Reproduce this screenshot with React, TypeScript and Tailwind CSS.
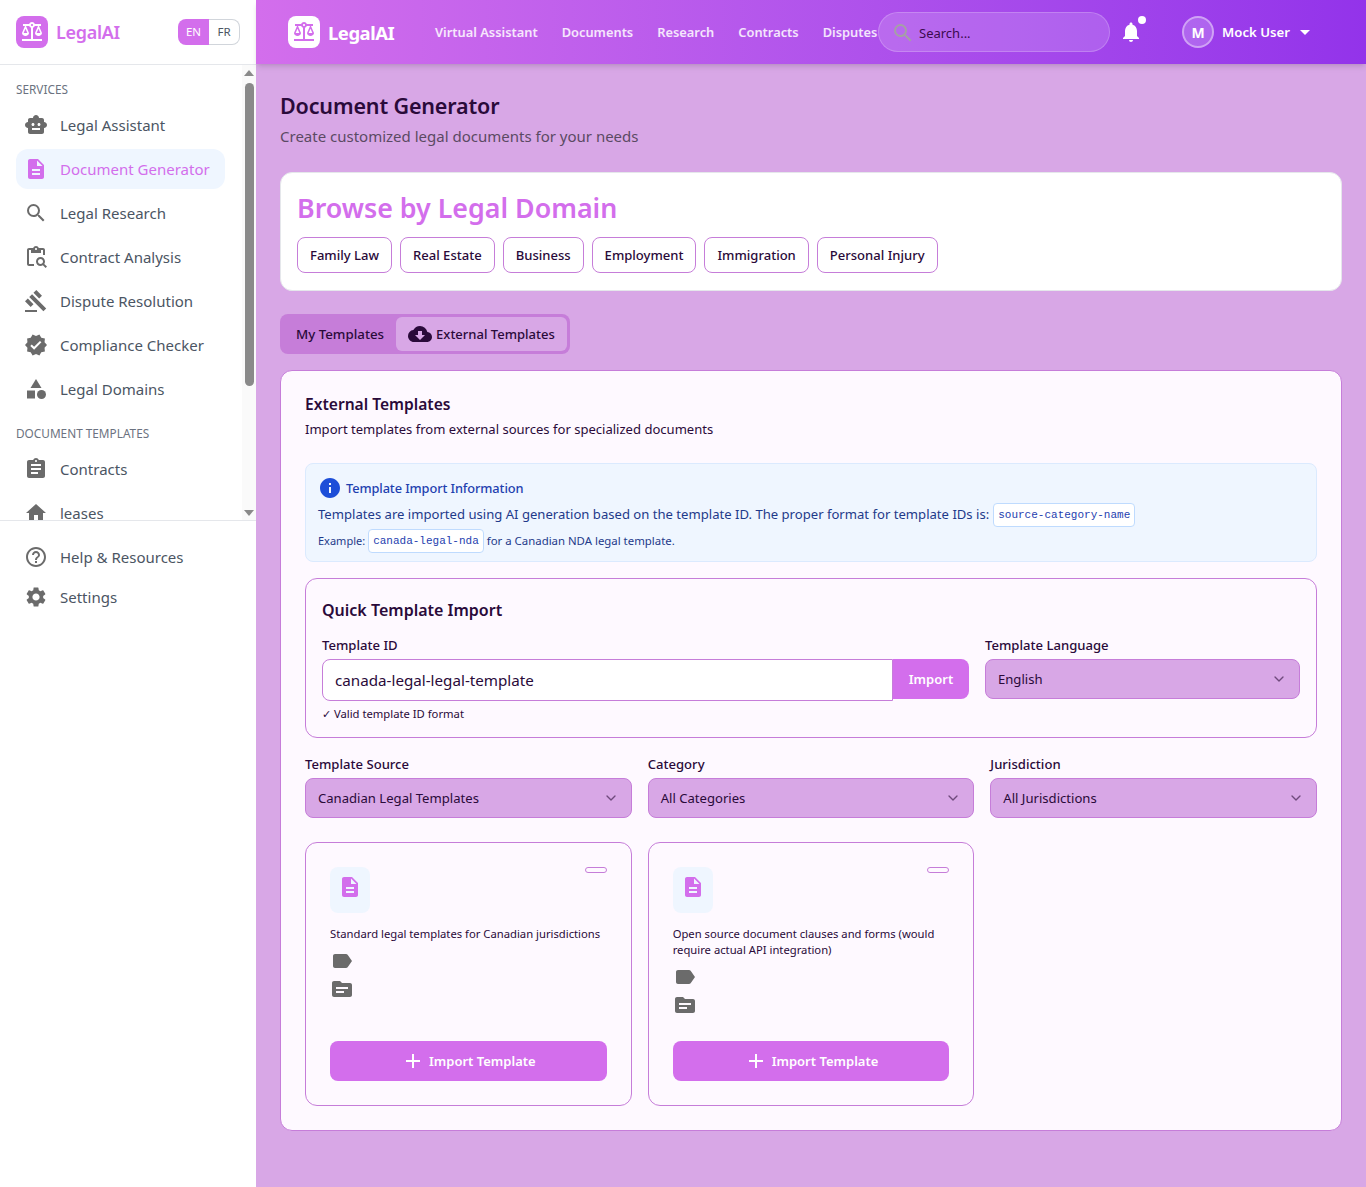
import React from 'react';
import { ChevronDown } from 'lucide-react';
import {
  MdAdd,
  MdArrowDropDown,
  MdAssignment,
  MdBalance,
  MdCategory,
  MdCloudDownload,
  MdDescription,
  MdGavel,
  MdHelpOutline,
  MdHome,
  MdInfo,
  MdLabel,
  MdNotifications,
  MdOutlineContentPasteSearch,
  MdSearch,
  MdSettings,
  MdSmartToy,
  MdTopic,
  MdVerified,
} from 'react-icons/md';
import type { IconType } from 'react-icons';

interface NavItem {
  label: string;
  icon: IconType;
  active?: boolean;
}

const services: NavItem[] = [
  { label: 'Legal Assistant', icon: MdSmartToy },
  { label: 'Document Generator', icon: MdDescription, active: true },
  { label: 'Legal Research', icon: MdSearch },
  { label: 'Contract Analysis', icon: MdOutlineContentPasteSearch },
  { label: 'Dispute Resolution', icon: MdGavel },
  { label: 'Compliance Checker', icon: MdVerified },
  { label: 'Legal Domains', icon: MdCategory },
];

const domains = ['Family Law', 'Real Estate', 'Business', 'Employment', 'Immigration', 'Personal Injury'];
const topLinks = ['Virtual Assistant', 'Documents', 'Research', 'Contracts', 'Disputes'];

const SideLink = ({ label, icon: Icon, active }: NavItem) => (
  <div
    className={`flex h-10 shrink-0 items-center gap-3 rounded-xl pl-2 text-[15px] whitespace-nowrap ${
      active ? 'bg-[#eff6ff] text-[#d36eec]' : 'text-[#4b5563]'
    }`}
  >
    <Icon className={`h-6 w-6 shrink-0 ${active ? 'text-[#d36eec]' : 'text-[#6b6b6b]'}`} />
    <span>{label}</span>
  </div>
);

const Sidebar = () => (
  <aside className="flex h-[1187px] w-[256px] shrink-0 flex-col bg-white">
    <div className="flex h-[65px] shrink-0 items-center justify-between border-b border-[#e5e7eb] pl-4 pr-4">
      <div className="flex items-center gap-2">
        <div className="flex h-8 w-8 items-center justify-center rounded-lg bg-[#d36eec]">
          <MdBalance className="h-6 w-6 text-white" />
        </div>
        <span className="text-[18px] font-semibold tracking-[-0.3px] text-[#d36eec]">LegalAI</span>
      </div>
      <div className="flex h-[26px] w-[62px] text-[11.5px]">
        <span className="flex w-[31px] items-center justify-center rounded-l-lg bg-[#d36eec] text-white">EN</span>
        <span className="flex flex-1 items-center justify-center rounded-r-lg border-y border-r border-[#d1d5db] text-[#4b5563]">
          FR
        </span>
      </div>
    </div>
    <div className="flex h-[456px] shrink-0 overflow-hidden border-b border-[#e5e7eb]">
      <div className="w-[242px] shrink-0 overflow-hidden pl-4 pr-[17px] pt-4">
        <p className="mb-[8px] text-[11.8px] leading-4 text-[#6b7280]">SERVICES</p>
        <div className="flex flex-col gap-1">
          {services.map((item) => (
            <SideLink key={item.label} {...item} />
          ))}
        </div>
        <p className="mb-[8px] mt-[16px] text-[11.8px] leading-4 text-[#6b7280]">DOCUMENT TEMPLATES</p>
        <div className="flex flex-col gap-1">
          <SideLink label="Contracts" icon={MdAssignment} />
          <SideLink label="leases" icon={MdHome} />
        </div>
      </div>
      <div className="flex w-[14px] shrink-0 flex-col items-center bg-[#fafafa]">
        <div className="mt-[5px] h-0 w-0 border-x-[5px] border-b-[6px] border-x-transparent border-b-[#8a8a8a]" />
        <div className="mt-[7px] h-[303px] w-[9px] rounded-full bg-[#8a8a8a]" />
        <div className="mt-auto mb-[4px] h-0 w-0 border-x-[5px] border-t-[6px] border-x-transparent border-t-[#8a8a8a]" />
      </div>
    </div>
    <div className="flex flex-col pl-4 pr-[31px] pt-4">
      <SideLink label="Help & Resources" icon={MdHelpOutline} />
      <SideLink label="Settings" icon={MdSettings} />
    </div>
  </aside>
);

const TopBar = () => (
  <header className="relative z-10 flex h-16 shrink-0 items-center bg-gradient-to-r from-[#d36eec] to-[#9333ea] pl-8 shadow-md">
    <div className="flex w-[147px] shrink-0 items-center gap-2">
      <div className="flex h-8 w-8 items-center justify-center rounded-lg bg-white">
        <MdBalance className="h-6 w-6 text-[#d36eec]" />
      </div>
      <span className="pt-px text-[18.5px] font-bold tracking-[-0.5px] text-white">LegalAI</span>
    </div>
    <nav className="flex w-[443px] shrink-0 gap-6 whitespace-nowrap pt-px text-[12.85px] font-semibold text-white/85">
      {topLinks.map((link) => (
        <span key={link}>{link}</span>
      ))}
    </nav>
    <div className="flex h-10 w-[232px] shrink-0 items-center rounded-[20px] border border-white/20 bg-white/15 pl-3">
      <MdSearch className="mt-[2px] h-6 w-6 text-[#a5a0a5]" />
      <span className="ml-[4px] pt-[3px] text-[13px] text-[#3b0a4f]">Search...</span>
    </div>
    <div className="relative ml-[9px] flex h-10 w-6 shrink-0 items-center justify-center">
      <MdNotifications className="h-6 w-6 text-white" />
      <span className="absolute right-[-3px] top-1 h-2 w-2 rounded-full bg-white" />
    </div>
    <div className="ml-[39px] flex h-8 w-8 shrink-0 items-center justify-center rounded-full border-2 border-white/40 bg-white/20 text-[14px] font-bold text-white">
      M
    </div>
    <span className="ml-2 pt-px text-[13.2px] font-semibold text-white">Mock User</span>
    <MdArrowDropDown className="ml-[3px] h-6 w-6 text-white" />
  </header>
);

const Select = ({ label, value }: { label: string; value: string }) => (
  <div className="flex min-w-0 flex-col">
    <label className="mb-1 text-[13.1px] font-medium leading-5 text-[#2a0a3a]">{label}</label>
    <div className="flex h-10 items-center justify-between rounded-lg border border-[#c67dd9] bg-[#d8a7e6] pl-3 pr-3 text-[13.1px] text-[#2a0a3a]">
      <span className="pt-px">{value}</span>
      <ChevronDown className="h-4 w-4 text-[#6f4a7c]" />
    </div>
  </div>
);

const SourceCard = ({ description }: { description: string }) => (
  <div className="flex h-[264px] flex-col rounded-xl border border-[#c67dd9] px-6 pb-6 pt-6">
    <div className="flex items-start justify-between">
      <div className="flex h-[46px] w-10 items-start justify-center rounded-lg bg-[#eff6ff] pt-2">
        <MdDescription className="h-6 w-6 text-[#d36eec]" />
      </div>
      <span className="h-[6px] w-[22px] rounded-full border border-[#c67dd9]" />
    </div>
    <p className="mt-[13px] text-[11.25px] leading-4 text-[#2a0a3a]">{description}</p>
    <MdLabel className="mt-[7px] h-6 w-6 text-[#6b6b6b]" />
    <MdTopic className="mt-1 h-6 w-6 text-[#6b6b6b]" />
    <button className="mt-auto flex h-10 w-full items-center justify-center gap-1 rounded-lg bg-[#d36eec] text-[13px] font-semibold text-white">
      <MdAdd className="h-6 w-6" />
      <span className="pt-px">Import Template</span>
    </button>
  </div>
);

const ExternalTemplates = () => (
  <section className="h-[761px] rounded-xl border border-[#c67dd9] bg-[#fef9ff] p-6">
    <h2 className="text-[15.6px] font-semibold leading-[19px] text-[#2a0a3a]">External Templates</h2>
    <p className="mt-[5px] text-[13.05px] leading-5 text-[#2a0a3a]">Import templates from external sources for specialized documents</p>

    <div className="mt-6 h-[99px] rounded-lg border border-[#dbeafe] bg-[#eff6ff] px-3 pt-[12px]">
      <div className="flex h-6 items-center gap-1 pl-px">
        <MdInfo className="-ml-px h-6 w-6 text-[#1d4ed8]" />
        <span className="pt-px text-[12.8px] font-medium tracking-[-0.1px] text-[#1e40af]">Template Import Information</span>
      </div>
      <p className="mt-[3px] flex h-6 items-center whitespace-nowrap text-[13.1px] text-[#1e3a8a]">
        Templates are imported using AI generation based on the template ID. The proper format for template IDs is:
        <code className="ml-1 flex h-6 items-center rounded border border-[#bfdbfe] bg-white px-1 font-['Liberation_Mono',monospace] text-[11px] text-[#1e40af]">
          source-category-name
        </code>
      </p>
      <p className="mt-[2px] flex h-6 items-center whitespace-nowrap text-[11.4px] text-[#1e3a8a]">
        <span className="text-[11px]">Example:</span>
        <code className="mx-[3px] flex h-6 items-center rounded border border-[#bfdbfe] bg-white px-1 font-['Liberation_Mono',monospace] text-[11px] text-[#1e40af]">
          canada-legal-nda
        </code>
        for a Canadian NDA legal template.
      </p>
    </div>

    <div className="mt-4 h-[160px] rounded-xl border border-[#c67dd9] px-4 pt-4">
      <h3 className="pt-px text-[16px] font-semibold leading-7 text-[#2a0a3a]">Quick Template Import</h3>
      <div className="mt-[11px] grid grid-cols-[647px_1fr] gap-4">
        <div className="flex flex-col">
          <label className="mb-1 text-[13.1px] font-medium leading-5 text-[#2a0a3a]">Template ID</label>
          <div className="flex items-start">
            <div className="flex h-[42px] flex-1 items-center rounded-l-lg border border-[#c67dd9] bg-white px-3 text-[15.2px] text-[#2a0a3a]">
              canada-legal-legal-template
            </div>
            <button className="flex h-10 w-[76px] items-center justify-center rounded-r-lg bg-[#d36eec] pt-px text-[13px] font-semibold text-white">
              Import
            </button>
          </div>
          <p className="mt-[5px] text-[11.25px] leading-4 text-[#2a0a3a]">✓ Valid template ID format</p>
        </div>
        <Select label="Template Language" value="English" />
      </div>
    </div>

    <div className="mt-4 grid grid-cols-3 gap-4">
      <Select label="Template Source" value="Canadian Legal Templates" />
      <Select label="Category" value="All Categories" />
      <Select label="Jurisdiction" value="All Jurisdictions" />
    </div>

    <div className="mt-6 grid grid-cols-3 gap-4">
      <SourceCard description="Standard legal templates for Canadian jurisdictions" />
      <SourceCard description="Open source document clauses and forms (would require actual API integration)" />
    </div>
  </section>
);

const App = () => {
  return (
    <div className="flex min-h-[1187px] font-['Noto_Sans',sans-serif]">
      <Sidebar />
      <div className="flex min-w-0 flex-1 flex-col bg-[#d8a7e6]">
        <TopBar />
        <main className="flex-1 px-6 pt-[26px]">
          <h1 className="text-[21.5px] font-semibold leading-8 tracking-[-0.15px] text-[#2a0a3a]">Document Generator</h1>
          <p className="mt-[2px] text-[15px] leading-6 text-[#5b4a63]">Create customized legal documents for your needs</p>

          <div className="mt-6 h-[119px] rounded-xl border border-[#e5e7eb] bg-white px-4 pt-[15px]">
            <h2 className="text-[26.8px] font-semibold leading-10 text-[#d36eec]">Browse by Legal Domain</h2>
            <div className="mt-[9px] flex gap-2">
              {domains.map((domain) => (
                <button
                  key={domain}
                  className="h-9 rounded-lg border border-[#c67dd9] px-3 pt-px text-[13.05px] font-medium text-[#2a0a3a]"
                >
                  {domain}
                </button>
              ))}
            </div>
          </div>

          <div className="mt-[23px] flex h-10 w-fit items-center rounded-lg bg-[#c67dd9] p-[3px] text-[13px] font-medium text-[#2a0a3a]">
            <span className="pl-[13px] pr-3 pt-px text-[13.3px]">My Templates</span>
            <span className="flex h-[34px] items-center gap-1 rounded-md bg-[#d8a7e6] px-3">
              <MdCloudDownload className="h-6 w-6" />
              <span className="pt-px">External Templates</span>
            </span>
          </div>

          <div className="mt-4">
            <ExternalTemplates />
          </div>
        </main>
      </div>
    </div>
  );
};

export default App;
